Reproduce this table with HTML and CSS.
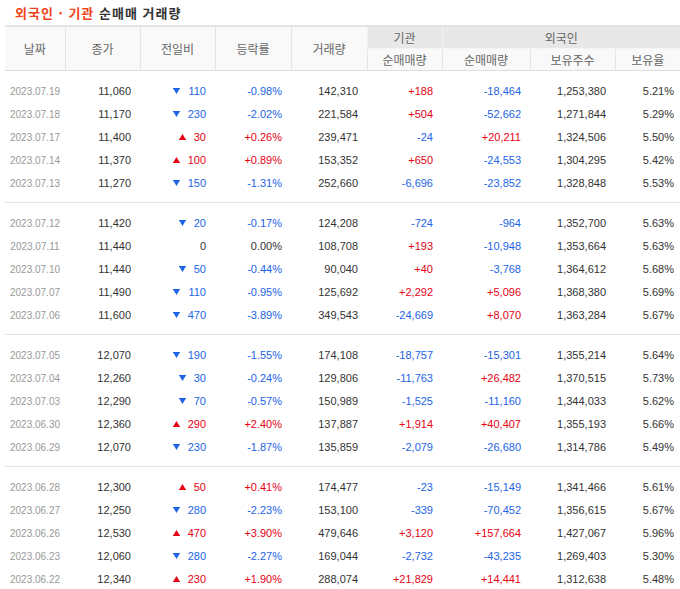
FILE: index.html
```html
<!DOCTYPE html>
<html lang="ko">
<head>
<meta charset="utf-8">
<link rel="stylesheet" href="styles.css">
</head>
<body>
<div class="wrap">
  <h2 class="title"><span class="accent">외국인 · 기관</span> 순매매 거래량</h2>
  <table class="grid">
    <colgroup>
      <col class="c-date"><col class="c-75"><col class="c-75"><col class="c-76"><col class="c-76"><col class="c-75"><col class="c-88"><col class="c-85"><col class="c-last">
    </colgroup>
    <thead>
      <tr>
        <th rowspan="2">날짜</th>
        <th rowspan="2">종가</th>
        <th rowspan="2">전일비</th>
        <th rowspan="2">등락률</th>
        <th rowspan="2">거래량</th>
        <th class="grp">기관</th>
        <th class="grp" colspan="3">외국인</th>
      </tr>
      <tr>
        <th class="sub">순매매량</th>
        <th class="sub">순매매량</th>
        <th class="sub">보유주수</th>
        <th class="sub">보유율</th>
      </tr>
    </thead>
    <tbody id="body"></tbody>
  </table>
</div>
<script src="app.js"></script>
</body>
</html>
```

FILE: app.js
```js
const groups = [
  [
    ["2023.07.19","11,060","d","110","-0.98%","142,310","+188","-18,464","1,253,380","5.21%"],
    ["2023.07.18","11,170","d","230","-2.02%","221,584","+504","-52,662","1,271,844","5.29%"],
    ["2023.07.17","11,400","u","30","+0.26%","239,471","-24","+20,211","1,324,506","5.50%"],
    ["2023.07.14","11,370","u","100","+0.89%","153,352","+650","-24,553","1,304,295","5.42%"],
    ["2023.07.13","11,270","d","150","-1.31%","252,660","-6,696","-23,852","1,328,848","5.53%"]
  ],
  [
    ["2023.07.12","11,420","d","20","-0.17%","124,208","-724","-964","1,352,700","5.63%"],
    ["2023.07.11","11,440","n","0","0.00%","108,708","+193","-10,948","1,353,664","5.63%"],
    ["2023.07.10","11,440","d","50","-0.44%","90,040","+40","-3,768","1,364,612","5.68%"],
    ["2023.07.07","11,490","d","110","-0.95%","125,692","+2,292","+5,096","1,368,380","5.69%"],
    ["2023.07.06","11,600","d","470","-3.89%","349,543","-24,669","+8,070","1,363,284","5.67%"]
  ],
  [
    ["2023.07.05","12,070","d","190","-1.55%","174,108","-18,757","-15,301","1,355,214","5.64%"],
    ["2023.07.04","12,260","d","30","-0.24%","129,806","-11,763","+26,482","1,370,515","5.73%"],
    ["2023.07.03","12,290","d","70","-0.57%","150,989","-1,525","-11,160","1,344,033","5.62%"],
    ["2023.06.30","12,360","u","290","+2.40%","137,887","+1,914","+40,407","1,355,193","5.66%"],
    ["2023.06.29","12,070","d","230","-1.87%","135,859","-2,079","-26,680","1,314,786","5.49%"]
  ],
  [
    ["2023.06.28","12,300","u","50","+0.41%","174,477","-23","-15,149","1,341,466","5.61%"],
    ["2023.06.27","12,250","d","280","-2.23%","153,100","-339","-70,452","1,356,615","5.67%"],
    ["2023.06.26","12,530","u","470","+3.90%","479,646","+3,120","+157,664","1,427,067","5.96%"],
    ["2023.06.23","12,060","d","280","-2.27%","169,044","-2,732","-43,235","1,269,403","5.30%"],
    ["2023.06.22","12,340","u","230","+1.90%","288,074","+21,829","+14,441","1,312,638","5.48%"]
  ]
];

const downSvg = '<svg class="arw" width="7" height="6" viewBox="0 0 7 6"><rect x="0" y="0" width="7" height="1" fill="currentColor"/><path d="M0.5 1 L6.5 1 L3.5 6 Z" fill="currentColor"/></svg>';
const upSvg = '<svg class="arw" width="7" height="6" viewBox="0 0 7 6"><path d="M3.5 0 L6.5 5 L0.5 5 Z" fill="currentColor"/><rect x="0" y="5" width="7" height="1" fill="currentColor"/></svg>';

function sign(v) {
  if (v[0] === "+") return "up";
  if (v[0] === "-") return "dn";
  return "";
}

const body = document.getElementById("body");
const table = body.parentNode;
table.removeChild(body);

groups.forEach((rows) => {
  const tb = document.createElement("tbody");
  tb.className = "group";
  rows.forEach((r, i) => {
    const tr = document.createElement("tr");
    if (i === 0) tr.className = "first";
    if (i === rows.length - 1) tr.className = "last";
    const dirCls = r[2] === "u" ? "up" : r[2] === "d" ? "dn" : "";
    const arrow = r[2] === "u" ? upSvg : r[2] === "d" ? downSvg : "";
    tr.innerHTML =
      '<td class="date">' + r[0] + '</td>' +
      '<td class="num">' + r[1] + '</td>' +
      '<td class="num ' + dirCls + '">' + arrow + r[3] + '</td>' +
      '<td class="num ' + sign(r[4]) + '">' + r[4] + '</td>' +
      '<td class="num">' + r[5] + '</td>' +
      '<td class="num ' + sign(r[6]) + '">' + r[6] + '</td>' +
      '<td class="num ' + sign(r[7]) + '">' + r[7] + '</td>' +
      '<td class="num">' + r[8] + '</td>' +
      '<td class="num pct">' + r[9] + '</td>';
    tb.appendChild(tr);
  });
  table.appendChild(tb);
});
```

FILE: styles.css
```css
html, body {
  margin: 0;
  padding: 0;
  background: #fff;
  overflow: hidden;
}

.wrap {
  padding-left: 5px;
  width: 675px;
}

.title {
  margin: 0;
  height: 25px;
  line-height: 25px;
  padding-left: 10px;
  font-family: "Noto Sans CJK KR", "Noto Sans", sans-serif;
  font-size: 13px;
  font-weight: bold;
  color: #333;
  letter-spacing: 1px;
}

.title .accent {
  color: #f0441b;
}

.grid {
  width: 675px;
  border-collapse: collapse;
  table-layout: fixed;
  border-top: 2px solid #e2e2e2;
  font-family: "Liberation Sans", Arial, sans-serif;
  font-size: 11px;
  color: #333;
}

.c-date { width: 60px; }
.c-75 { width: 75px; }
.c-76 { width: 76px; }
.c-88 { width: 88px; }
.c-85 { width: 85px; }
.c-last { width: 65px; }

.grid th {
  font-family: "Noto Sans CJK KR", "Noto Sans", sans-serif;
  font-weight: normal;
  font-size: 12px;
  color: #666;
  background: #f9f9f9;
  border-left: 1px solid #e4e4e4;
  border-bottom: 1px solid #dedede;
  height: 21px;
  line-height: 21px;
  padding: 0;
  text-align: center;
}

.grid thead tr:first-child th:first-child {
  border-left: none;
}

.grid th.grp {
  background: #e8e8e8;
  border-left: 1px solid #f2f2f2;
  border-bottom: 1px solid #f4f4f4;
  height: 20px;
}

.grid th.sub {
  border-left: 1px solid #e4e4e4;
}

.grid td {
  height: 23px;
  padding: 0 9px 0 0;
  white-space: nowrap;
  line-height: 23px;
}

.grid tr.first td {
  padding-top: 9px;
}

.grid tr.last td {
  padding-bottom: 7px;
  border-bottom: 1px solid #e2e2e2;
}

.grid td.date {
  text-align: center;
  padding-right: 0;
  font-size: 10px;
  color: #999;
}

.grid td.num {
  text-align: right;
}

.grid td.pct {
  padding-right: 6px;
}

.grid td.up { color: #e60012; }
.grid td.dn { color: #1d64e6; }

.arw {
  display: inline-block;
  vertical-align: middle;
  margin: -2px 8px 0 0;
}
```
